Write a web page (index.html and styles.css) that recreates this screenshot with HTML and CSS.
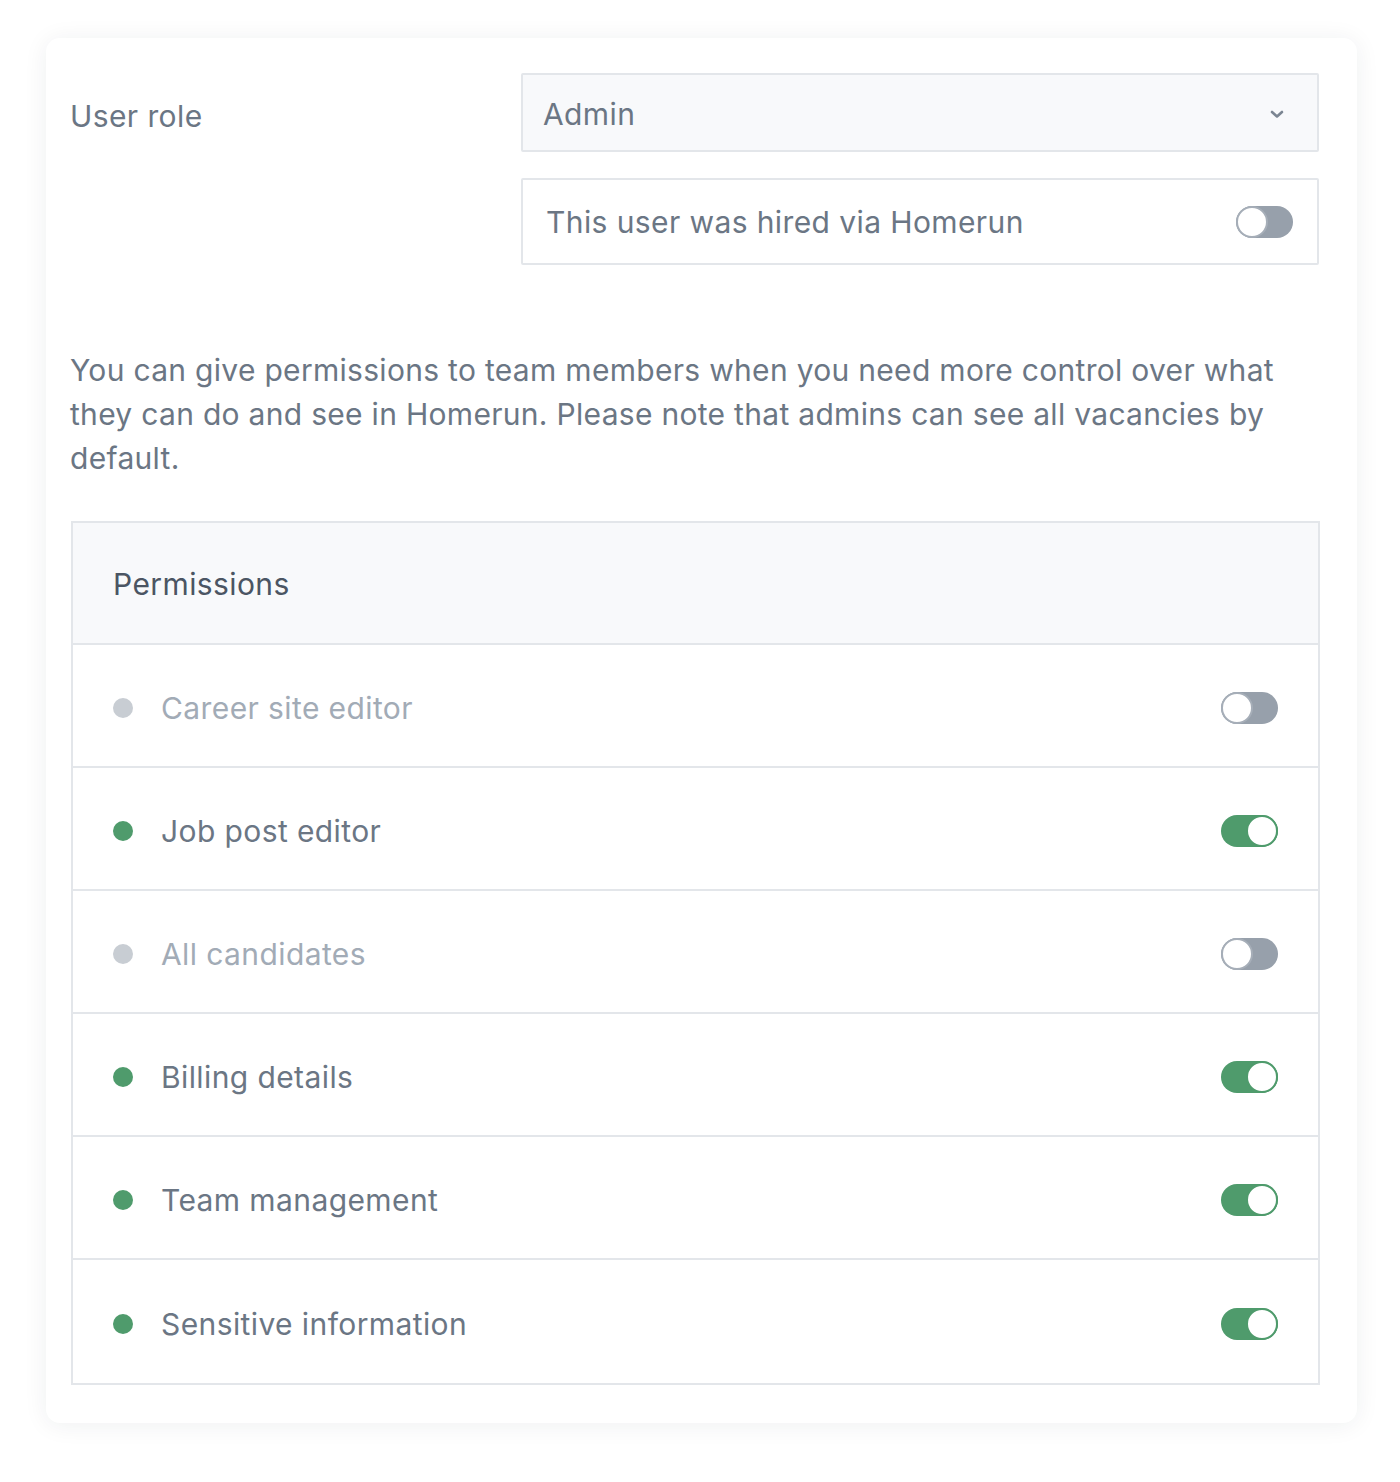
FILE: index.html
```html
<!DOCTYPE html>
<html>
<head>
<meta charset="utf-8">
<link rel="stylesheet" href="styles.css">
</head>
<body>
<div class="card">
  <div class="role-row">
    <div class="label">User role</div>
    <div class="fields">
      <div class="select">
        <span>Admin</span>
        <svg class="chev" width="16" height="10" viewBox="0 0 16 10"><path d="M3 3 L8 7.5 L13 3" fill="none" stroke="#7b8592" stroke-width="2.6" stroke-linecap="round" stroke-linejoin="round"/></svg>
      </div>
      <div class="hired">
        <span>This user was hired via Homerun</span>
        <span class="toggle off"></span>
      </div>
    </div>
  </div>
  <p class="note">You can give permissions to team members when you need more control over what they can do and see in Homerun. Please note that admins can see all vacancies by default.</p>
  <div class="perms">
    <div class="perm-head">Permissions</div>
    <div class="perm disabled"><span class="dot"></span><span class="name">Career site editor</span><span class="toggle off"></span></div>
    <div class="perm"><span class="dot"></span><span class="name">Job post editor</span><span class="toggle on"></span></div>
    <div class="perm disabled"><span class="dot"></span><span class="name">All candidates</span><span class="toggle off"></span></div>
    <div class="perm"><span class="dot"></span><span class="name">Billing details</span><span class="toggle on"></span></div>
    <div class="perm"><span class="dot"></span><span class="name">Team management</span><span class="toggle on"></span></div>
    <div class="perm"><span class="dot"></span><span class="name">Sensitive information</span><span class="toggle on"></span></div>
  </div>
</div>
</body>
</html>
```
FILE: styles.css
```css
* { box-sizing: border-box; }
html, body { margin: 0; padding: 0; background: #ffffff; }
body {
  font-family: Inter, "Noto Sans", sans-serif;
  color: #6b7684;
  padding: 38px 43px 59px 46px;
}
.card {
  width: 1311px;
  height: 1385px;
  background: #fff;
  border-radius: 14px;
  box-shadow: 0 2px 24px rgba(30, 40, 60, 0.07);
  padding: 35px 37px 40px 24px;
}
.role-row {
  display: flex;
}
.label {
  width: 451px;
  font-size: 30px;
  line-height: 30px;
  padding-top: 28px;
  letter-spacing: 0.4px;
}
.fields {
  width: 798px;
  display: flex;
  flex-direction: column;
  gap: 26px;
}
.select {
  height: 79px;
  background: #f8f9fb;
  border: 2px solid #e3e6ea;
  border-radius: 2px;
  display: flex;
  align-items: center;
  justify-content: space-between;
  padding: 2px 32px 0 20px;
  font-size: 30px;
  letter-spacing: 0.4px;
}
.hired {
  height: 87px;
  border: 2px solid #e3e6ea;
  border-radius: 2px;
  display: flex;
  align-items: center;
  justify-content: space-between;
  padding: 0 24px 0 23px;
  font-size: 30px;
  letter-spacing: 0.4px;
}
.toggle {
  position: relative;
  width: 57px;
  height: 32px;
  border-radius: 16px;
  flex: none;
}
.toggle::after {
  content: "";
  position: absolute;
  top: 0;
  width: 32px;
  height: 32px;
  border-radius: 50%;
  background: #fff;
  box-sizing: border-box;
}
.toggle.off { background: #97a0ab; }
.toggle.off::after { left: 0; border: 2px solid #a6aeb8; }
.toggle.on { background: #4f9b6c; }
.toggle.on::after { right: 0; border: 2px solid #4f9b6c; }
.note {
  margin: 83px 0 41px 0;
  font-size: 30px;
  line-height: 44px;
  letter-spacing: 0.3px;
}
.perms {
  margin-left: 1px;
  border: 2px solid #e3e6ea;
}
.perm-head {
  height: 122px;
  background: #f8f9fb;
  border-bottom: 2px solid #e3e6ea;
  display: flex;
  align-items: center;
  padding: 2px 0 0 40px;
  font-size: 30px;
  color: #4b5563;
  letter-spacing: 0.4px;
}
.perm {
  height: 123px;
  display: flex;
  align-items: center;
  padding: 4px 40px 0 40px;
  border-bottom: 2px solid #e3e6ea;
  font-size: 30px;
  letter-spacing: 0.4px;
}
.perm:last-child { border-bottom: none; }
.dot {
  width: 20px;
  height: 20px;
  border-radius: 50%;
  background: #4f9b6c;
  margin-right: 28px;
  flex: none;
}
.name { flex: 1; }
.perm.disabled .dot { background: #c8cdd3; }
.perm.disabled .name { color: #a2abb6; }
```
